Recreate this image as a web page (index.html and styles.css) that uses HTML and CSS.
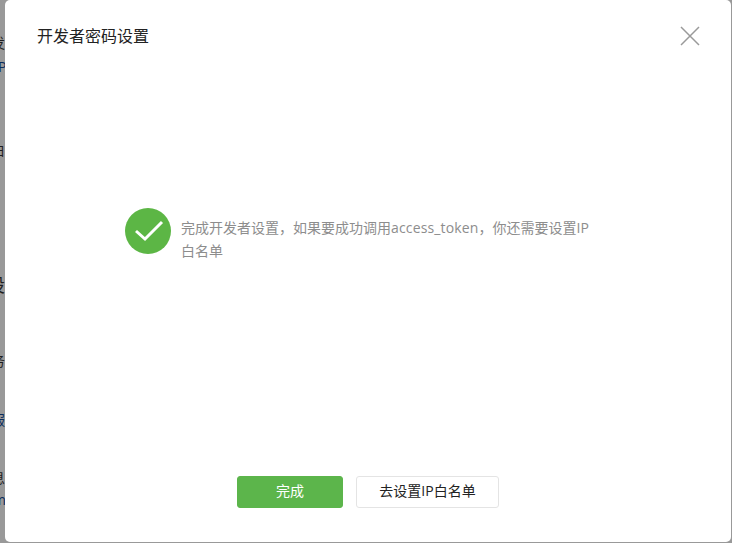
FILE: index.html
```html
<!DOCTYPE html>
<html lang="zh-CN">
<head>
<meta charset="utf-8">
<title>开发者密码设置</title>
<link rel="stylesheet" href="styles.css">
</head>
<body>
<div class="page">
  <span class="bg-text bg-1">发</span>
  <span class="bg-text bg-2 link">P</span>
  <span class="bg-text bg-3">白</span>
  <span class="bg-text bg-4 big">设</span>
  <span class="bg-text bg-5">务</span>
  <span class="bg-text bg-6 link">服</span>
  <span class="bg-text bg-7">息</span>
  <span class="bg-text bg-8 link">m</span>
</div>
<section class="dialog">
  <header class="dialog-head">
    <h1 class="dialog-title">开发者密码设置</h1>
    <svg class="close" width="20" height="20" viewBox="0 0 20 20"><path d="M1 1L19 19M19 1L1 19" stroke="#9a9a9a" stroke-width="1.5" fill="none"/></svg>
  </header>
  <div class="dialog-body">
    <svg class="ok" width="46" height="46" viewBox="0 0 46 46"><circle cx="23" cy="23" r="23" fill="#5cb645"/><path d="M11 23L20 31L37 14" stroke="#fff" stroke-width="3" fill="none"/></svg>
    <p class="message">完成开发者设置<span class="punct">，</span>如果要成功调用<span class="latin">access_token</span><span class="punct">，</span>你还需要设置IP白名单</p>
  </div>
  <footer class="dialog-foot">
    <button class="btn btn-primary">完成</button>
    <button class="btn btn-default">去设置IP白名单</button>
  </footer>
</section>
</body>
</html>
```
FILE: styles.css
```css
html, body {
  margin: 0;
  height: 100%;
  overflow: hidden;
  background: #999;
  font-family: "Open Sans", "Noto Sans CJK SC", sans-serif;
}
.page {
  position: absolute;
  inset: 0;
  overflow: hidden;
}
.bg-text {
  position: absolute;
  left: -9px;
  font-size: 14px;
  line-height: 20px;
  color: #1f1f1f;
}
.bg-text.link { color: #0b2c5c; }
.bg-text.big { font-size: 18px; line-height: 24px; left: -13px; }
.bg-1 { top: 33px; }
.bg-2 { top: 57px; left: -2px; }
.bg-3 { top: 140px; }
.bg-4 { top: 273px; }
.bg-5 { top: 351px; }
.bg-6 { top: 410px; }
.bg-7 { top: 468px; }
.bg-8 { top: 490px; left: -7px; }

.dialog {
  position: absolute;
  left: 5px;
  top: 0;
  width: 726px;
  height: 542px;
  background: #fff;
  border-radius: 5px;
  display: flex;
  flex-direction: column;
}
.dialog-head {
  display: flex;
  align-items: center;
  justify-content: space-between;
  height: 20px;
  padding: 26px 31px 0 32px;
}
.dialog-title {
  margin: 0;
  font-size: 16px;
  font-weight: 400;
  line-height: 22px;
  color: #222;
}
.dialog-body {
  flex: 1;
  display: flex;
  align-items: flex-start;
  padding: 162px 0 0 120px;
  gap: 10px;
}
.ok { flex: none; }
.message {
  margin: 8px 0 0;
  width: 412px;
  font-size: 14px;
  line-height: 23px;
  color: #8d8d8d;
}
.punct { font-family: "Noto Sans CJK TC", sans-serif; }
.latin { letter-spacing: 0.15px; }
.dialog-foot {
  display: flex;
  justify-content: center;
  gap: 13px;
  padding-bottom: 34px;
}
.btn {
  height: 32px;
  box-sizing: border-box;
  border-radius: 3px;
  font-family: inherit;
  font-size: 14px;
  line-height: 20px;
  padding: 0 0 2px;
}
.btn-primary {
  width: 106px;
  background: #5cb54b;
  border: 1px solid #5cb54b;
  color: #fff;
}
.btn-default {
  width: 143px;
  background: #fff;
  border: 1px solid #e4e4e4;
  color: #222;
}
```
